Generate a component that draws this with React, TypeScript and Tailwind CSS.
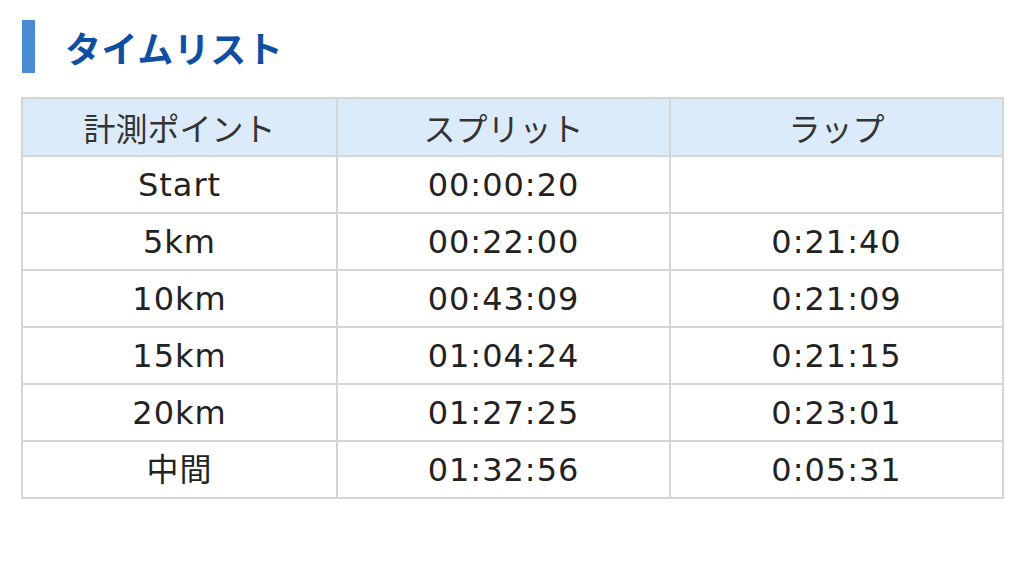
import React from "react";

const rows: [string, string, string][] = [
  ["Start", "00:00:20", ""],
  ["5km", "00:22:00", "0:21:40"],
  ["10km", "00:43:09", "0:21:09"],
  ["15km", "01:04:24", "0:21:15"],
  ["20km", "01:27:25", "0:23:01"],
  ["中間", "01:32:56", "0:05:31"],
];

const font = { fontFamily: '"DejaVu Sans", Verdana, "Noto Sans CJK JP", sans-serif' };

export default function App() {
  return (
    <div className="w-[1024px] h-[577px] bg-white pl-[21px] pt-[20px]" style={font}>
      <div className="flex items-center h-[53px]">
        <div className="w-[13px] h-[53px] bg-[#4a8bd6] ml-[1px]" />
        <h2
          className="ml-[30px] text-[36px] font-bold text-[#0e4ea3] leading-none tracking-[0.5px]"
          style={{ fontFamily: '"Noto Sans CJK JP", sans-serif' }}
        >
          タイムリスト
        </h2>
      </div>
      <table className="mt-[24px] w-[981px] table-fixed border-collapse border-2 border-[#d5d5d5] text-[32px] text-[#222]">
        <colgroup>
          <col className="w-[315px]" />
          <col className="w-[333px]" />
          <col className="w-[333px]" />
        </colgroup>
        <thead>
          <tr className="h-[58px] bg-[#dcebf9]">
            {["計測ポイント", "スプリット", "ラップ"].map((h) => (
              <th
                key={h}
                className="border-2 border-[#d5d5d5] font-normal text-center text-[#333] p-0"
                style={{ fontFamily: '"Noto Sans CJK JP", sans-serif' }}
              >
                {h}
              </th>
            ))}
          </tr>
        </thead>
        <tbody>
          {rows.map((r) => (
            <tr key={r[0]} className="h-[57px]">
              {r.map((c, i) => (
                <td
                  key={i}
                  className="border-2 border-[#d5d5d5] text-center p-0 leading-none tracking-[1px]"
                >
                  {c}
                </td>
              ))}
            </tr>
          ))}
        </tbody>
      </table>
    </div>
  );
}
